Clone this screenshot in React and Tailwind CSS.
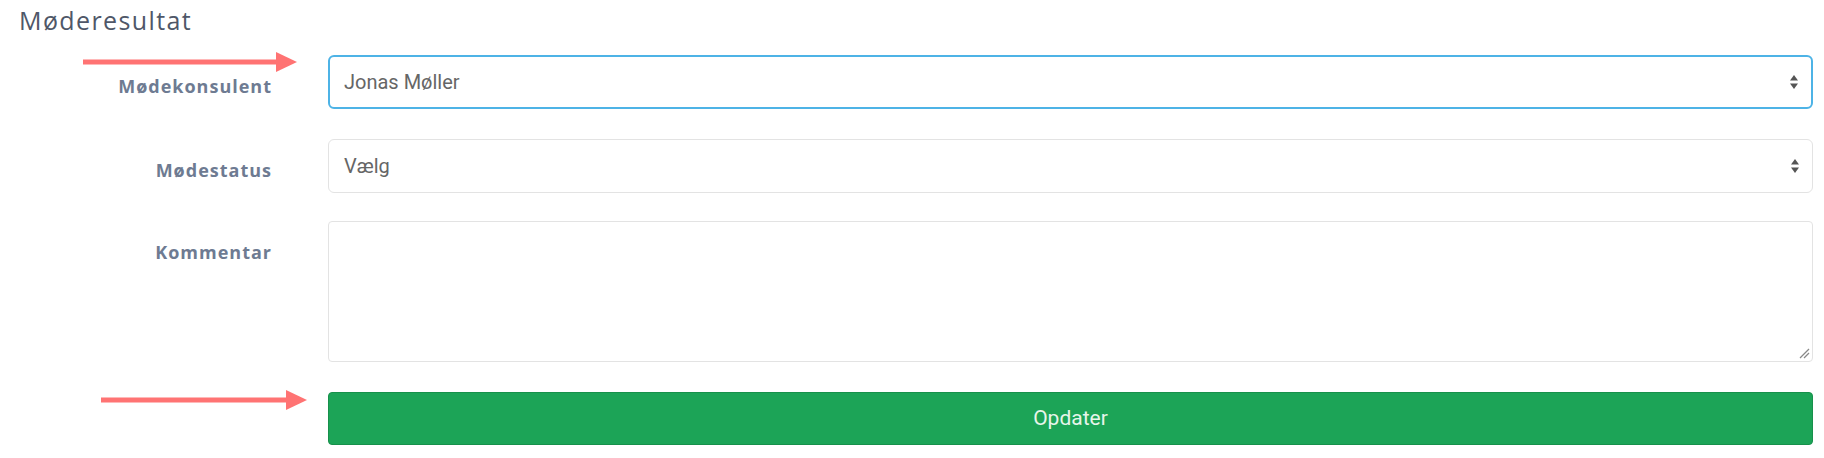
import React from "react";

function UpDown() {
  return (
    <svg width="10" height="16" viewBox="0 0 10 16" className="absolute right-[12px] top-1/2 -translate-y-1/2">
      <path d="M5 1 L9 6.5 L1 6.5 Z" fill="#555" />
      <path d="M5 15 L9 9.5 L1 9.5 Z" fill="#555" />
    </svg>
  );
}

function Arrow({ x1, x2, y }) {
  return (
    <svg className="absolute left-0 top-0 pointer-events-none" width="1824" height="458">
      <line x1={x1} y1={y} x2={x2 - 18} y2={y} stroke="#ff7373" strokeWidth="5" />
      <path d={`M${x2 - 21} ${y - 10} L${x2} ${y} L${x2 - 21} ${y + 10} Z`} fill="#ff7373" />
    </svg>
  );
}

export default function App() {
  const label = "text-right text-[18px] tracking-[1px] font-bold text-[#6e7b92] pt-[20px] leading-[22px]";
  const field = { fontFamily: "Roboto, 'Open Sans', sans-serif" };
  return (
    <div className="relative w-[1824px] h-[458px] bg-white overflow-hidden" style={{ fontFamily: "'Open Sans', 'Noto Sans', sans-serif" }}>
      <div className="pl-[19px] pt-[1px] h-[55px] text-[25px] tracking-[1.4px] leading-[38px] text-[#4f5768]">Møderesultat</div>
      <div className="grid grid-cols-[272px_1fr] gap-x-[56px] pr-[11px]">
        <div className={label}>Mødekonsulent</div>
        <div className="relative h-[54px] rounded-[6px] border-2 border-[#4db3e6] flex items-center pl-[14px] text-[20px] text-[#666]" style={field}>
          Jonas Møller
          <UpDown />
        </div>

        <div className={`${label} mt-[30px]`}>Mødestatus</div>
        <div className="relative mt-[30px] h-[54px] rounded-[6px] border border-[#e3e3e3] flex items-center pl-[15px] text-[20px] text-[#666]" style={field}>
          Vælg
          <UpDown />
        </div>

        <div className={`${label} mt-[28px]`}>Kommentar</div>
        <div className="relative mt-[28px] h-[141px] rounded-[4px] border border-[#e3e3e3]">
          <svg width="12" height="12" viewBox="0 0 12 12" className="absolute right-[2px] bottom-[2px]">
            <line x1="2" y1="11" x2="11" y2="2" stroke="#888" strokeWidth="1.2" />
            <line x1="6" y1="11" x2="11" y2="6" stroke="#888" strokeWidth="1.2" />
          </svg>
        </div>

        <div className="mt-[30px]" />
        <div className="mt-[30px] h-[53px] rounded-[4px] bg-[#1ca457] border border-[#17904b] flex items-center justify-center text-[21px] text-[#e6f5ea]" style={field}>
          Opdater
        </div>
      </div>
      <Arrow x1={83} x2={297} y={62} />
      <Arrow x1={101} x2={307} y={400} />
    </div>
  );
}
